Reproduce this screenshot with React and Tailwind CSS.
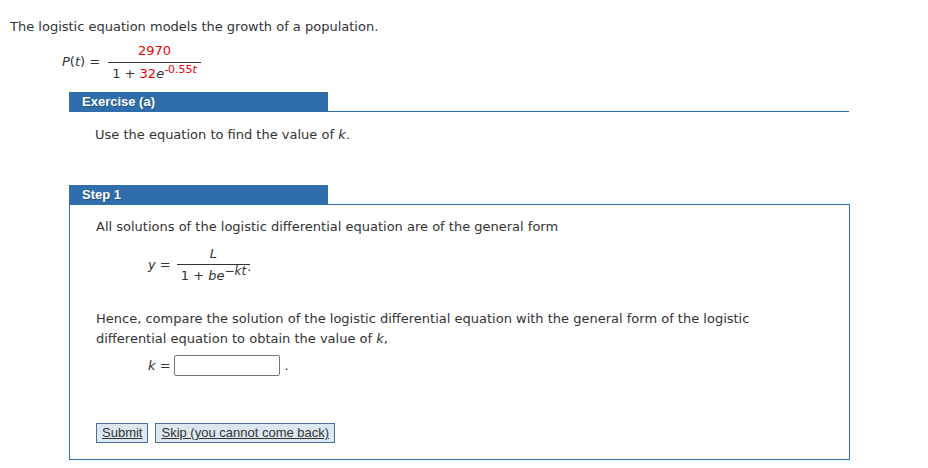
import React from "react";

const Frac = ({ num, den, numGap = "pb-[2px]", denGap = "pt-[2px]" }) => (
  <span className="inline-flex flex-col items-center align-middle">
    <span className={`px-1 leading-[18px] ${numGap}`}>{num}</span>
    <span className={`border-t border-[#333] px-1 leading-[18px] ${denGap}`}>{den}</span>
  </span>
);

const Header = ({ title }) => (
  <div className="flex border-b border-[#2f6dab]">
    <div className="w-[259px] h-[19px] bg-[#2f6dab] pl-[13px] text-white font-bold text-[13px] leading-[19px] font-['Liberation_Sans',Arial,sans-serif] [text-shadow:1px_1px_0_rgba(0,0,0,0.25)]">
      {title}
    </div>
  </div>
);

export default function App() {
  return (
    <div className="w-[928px] h-[468px] bg-white text-[#333] text-[13px] font-['DejaVu_Sans',Verdana,sans-serif] overflow-hidden">
      <p className="pt-[17px] pl-[10px] leading-[20px]">The logistic equation models the growth of a population.</p>

      {/* formula */}
      <div className="flex items-center pl-[62px] mt-[5px] h-[40px]">
        <span className="mr-[8px]">
          <i>P</i>(<i>t</i>) =
        </span>
        <Frac
          num={<span className="text-[#ee0000]">2970</span>}
          den={
            <span>
              1 + <span className="text-[#ee0000]">32</span>
              <i>e</i>
              <sup className="text-[11px] text-[#ee0000] relative top-[-5px]">
                -0.55<i>t</i>
              </sup>
            </span>
          }
        />
      </div>

      {/* exercise */}
      <div className="ml-[69px] w-[780px] mt-[10px]">
        <Header title="Exercise (a)" />
        <p className="pl-[26px] pt-[13px] leading-[20px]">
          Use the equation to find the value of <i>k</i>.
        </p>
      </div>

      {/* step 1 */}
      <div className="ml-[69px] w-[781px] mt-[40px]">
        <Header title="Step 1" />
        <div className="border border-t-0 border-[#2f6dab] h-[255px] pl-[26px] pt-[12px]">
          <p className="leading-[20px]">All solutions of the logistic differential equation are of the general form</p>
          <div className="flex items-center pl-[52px] mt-[8px] h-[40px]">
            <span className="mr-[6px]">
              <i>y</i> =
            </span>
            <Frac
              numGap="pb-[1px]"
              num={<i>L</i>}
              den={
                <span>
                  1 + <i>be</i>
                  <sup className="text-[12px] relative top-[-5px]">
                    −<i>kt</i>
                  </sup>
                </span>
              }
            />
            <span className="-ml-[3px] mt-[4px]">.</span>
          </div>
          <p className="leading-[20px] mt-[24px] w-[680px]">
            Hence, compare the solution of the logistic differential equation with the general form of the logistic
            differential equation to obtain the value of <i>k</i>,
          </p>
          <div className="flex items-center pl-[52px] mt-[6px]">
            <span className="mr-[3px]">
              <i>k</i> =
            </span>
            <input
              type="text"
              className="w-[106px] h-[21px] border border-[#767676] rounded-[2px] bg-white outline-none"
            />
            <span className="ml-[5px]">.</span>
          </div>
          <div className="flex gap-[7px] mt-[47px] font-['Liberation_Sans',Arial,sans-serif] text-[13px]">
            <button className="h-[20px] px-[5px] border border-[#4a6f96] bg-[#dde7f2] text-[#333] underline leading-[18px]">
              Submit
            </button>
            <button className="h-[20px] px-[5px] border border-[#4a6f96] bg-[#dde7f2] text-[#333] underline leading-[18px]">
              Skip (you cannot come back)
            </button>
          </div>
        </div>
      </div>
    </div>
  );
}
